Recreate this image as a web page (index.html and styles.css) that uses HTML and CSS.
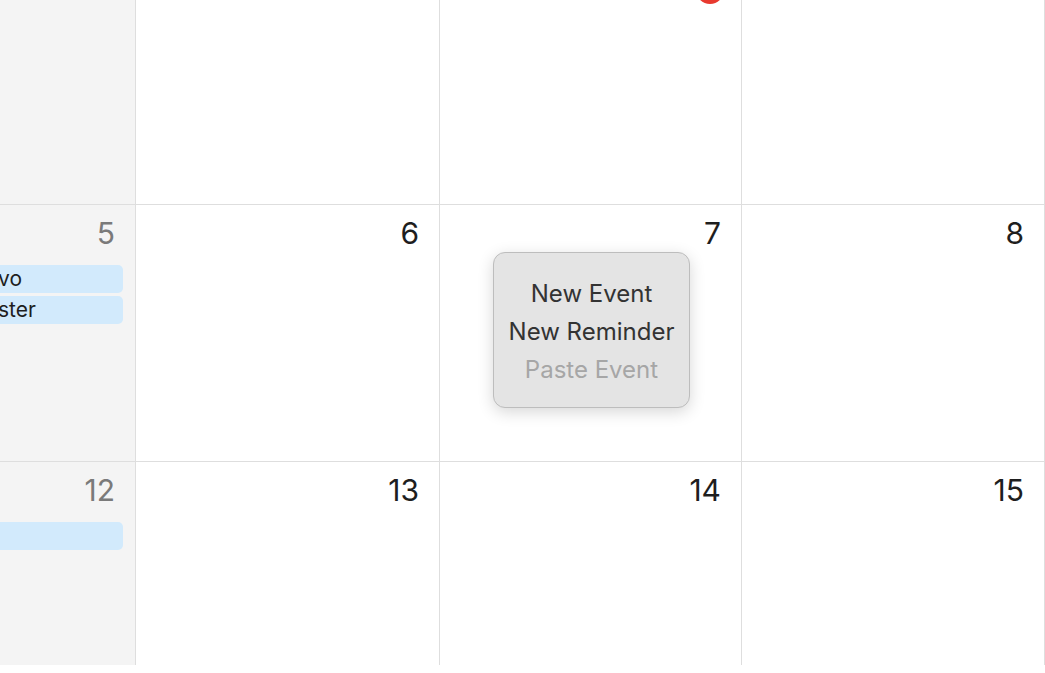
FILE: index.html
```html
<!doctype html>
<html lang="en">
<head>
    <meta charset="UTF-8">
    <title>Calendar</title>
    <link rel="stylesheet" href="styles.css">
</head>
<body>
<div class="month">
    <div class="day weekend"></div>
    <div class="day"></div>
    <div class="day"><span class="today"></span></div>
    <div class="day"></div>

    <div class="day weekend">
        <div class="num">5</div>
        <div class="event">vo</div>
        <div class="event">ster</div>
    </div>
    <div class="day"><div class="num">6</div></div>
    <div class="day">
        <div class="num">7</div>
        <div class="menu">
            <div class="item">New Event</div>
            <div class="item">New Reminder</div>
            <div class="item disabled">Paste Event</div>
        </div>
    </div>
    <div class="day"><div class="num">8</div></div>

    <div class="day weekend">
        <div class="num">12</div>
        <div class="event"></div>
    </div>
    <div class="day"><div class="num">13</div></div>
    <div class="day"><div class="num">14</div></div>
    <div class="day"><div class="num">15</div></div>
</div>
</body>
</html>
```
FILE: styles.css
```css
html, body {
    margin: 0;
    padding: 0;
    height: 100%;
    overflow: hidden;
    background: #fff;
    font-family: Inter, "Liberation Sans", sans-serif;
}

.month {
    display: grid;
    grid-template-columns: 135px 303px 301px 302px;
    grid-template-rows: 204px 256px 203px;
    gap: 1px;
    padding-right: 1px;
    width: 1045px;
    box-sizing: border-box;
    background: #dedede;
}

.day {
    background: #fff;
    position: relative;
    padding: 12px 20px 0 0;
    overflow: visible;
}

.day.weekend {
    background: #f4f4f4;
    padding-right: 12px;
    overflow: hidden;
}

.num {
    font-size: 30px;
    line-height: 32px;
    text-align: right;
    color: #1e1e1e;
}

.weekend .num {
    color: #7a7a7a;
    padding-right: 8px;
}

.event {
    height: 28px;
    line-height: 28px;
    margin: 3px 0 0 -10px;
    padding-left: 8px;
    background: #d2eafc;
    border-radius: 5px;
    font-size: 21px;
    color: #1e1e1e;
}

.num + .event {
    margin-top: 16px;
}

.today {
    position: absolute;
    left: 256px;
    top: -24px;
    width: 28px;
    height: 28px;
    border-radius: 50%;
    background: #e8392f;
}

.menu {
    position: absolute;
    left: 53px;
    top: 47px;
    width: 197px;
    height: 156px;
    box-sizing: border-box;
    padding-top: 22px;
    background: #e4e4e4;
    border: 1px solid #bdbdbd;
    border-radius: 12px;
    box-shadow: 0 4px 16px rgba(0, 0, 0, 0.16);
    text-align: center;
    z-index: 2;
}

.item {
    font-size: 24px;
    line-height: 38px;
    color: #333;
}

.item.disabled {
    color: #a6a6a6;
}
```
